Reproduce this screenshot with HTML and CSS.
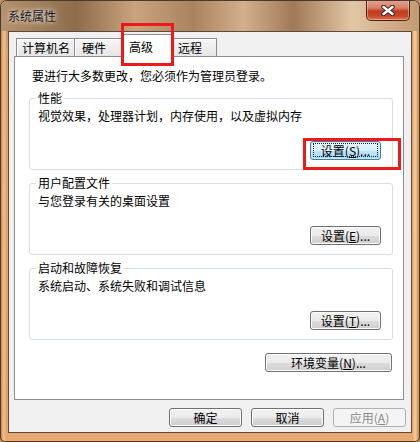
FILE: index.html
```html
<!DOCTYPE html>
<html lang="zh-CN">
<head>
    <meta charset="UTF-8">
    <title>系统属性</title>
    <link rel="stylesheet" href="styles.css">
</head>
<body>
    <div class="window">
        <div class="titlebar">
            <span class="title">系统属性</span>
            <button class="close-btn" aria-label="关闭">
                <svg width="14" height="11" viewBox="0 0 14 11">
                    <path d="M2.5 2 L11.5 9 M11.5 2 L2.5 9" stroke="#3b2c2a" stroke-width="4.6" stroke-linecap="round"/>
                    <path d="M2.5 2 L11.5 9 M11.5 2 L2.5 9" stroke="#ffffff" stroke-width="2.4" stroke-linecap="round"/>
                </svg>
            </button>
        </div>

        <div class="client">
            <div class="tabs">
                <div class="tab tab-name">计算机名</div>
                <div class="tab tab-hw">硬件</div>
                <div class="tab tab-adv active">高级<span class="mark mark-tab"></span></div>
                <div class="tab tab-remote">远程</div>
            </div>

            <div class="panel">
                <p class="intro">要进行大多数更改，您必须作为管理员登录。</p>

                <fieldset class="group">
                    <legend>性能</legend>
                    <p class="desc">视觉效果，处理器计划，内存使用，以及虚拟内存</p>
                    <div class="group-actions">
                        <span class="btn-wrap">
                            <button class="btn btn-set btn-default">设置(<u>S</u>)...</button>
                            <span class="mark mark-btn"></span>
                        </span>
                    </div>
                </fieldset>

                <fieldset class="group">
                    <legend>用户配置文件</legend>
                    <p class="desc">与您登录有关的桌面设置</p>
                    <div class="group-actions">
                        <button class="btn btn-set">设置(<u>E</u>)...</button>
                    </div>
                </fieldset>

                <fieldset class="group">
                    <legend>启动和故障恢复</legend>
                    <p class="desc">系统启动、系统失败和调试信息</p>
                    <div class="group-actions">
                        <button class="btn btn-set">设置(<u>T</u>)...</button>
                    </div>
                </fieldset>

                <div class="env-row">
                    <button class="btn btn-env">环境变量(<u>N</u>)...</button>
                </div>
            </div>

            <div class="footer">
                <button class="btn btn-foot">确定</button>
                <button class="btn btn-foot">取消</button>
                <button class="btn btn-foot" disabled>应用(<u>A</u>)</button>
            </div>
        </div>
    </div>
</body>
</html>
```

FILE: styles.css
```css
/* Reset */
* {
    margin: 0;
    padding: 0;
    box-sizing: border-box;
}

body {
    font-family: "Noto Sans CJK SC", "Noto Sans", sans-serif;
    font-size: 12px;
    color: #000;
    background: #b88d64;
}

/* Window frame */
.window {
    width: 420px;
    height: 442px;
    display: flex;
    flex-direction: column;
    padding: 0 7px 8px;
    border: 1px solid #4b3a2c;
    border-radius: 7px 7px 5px 5px;
    background:
        linear-gradient(90deg, #c98c56 0, #f2c294 3px, #e6a46a 5px, rgba(230, 164, 106, 0) 7px,
            rgba(230, 164, 106, 0) 411px, #e9ab72 412px, #f6cfa6 414px, #c98a52 418px),
        linear-gradient(180deg, #a98460 0, #b89470 28px, #d99f68 60px, #e4a56c 200px, #dd9a5e 380px, #e9aa70 442px);
    overflow: hidden;
}

.titlebar {
    height: 30px;
    margin: 0 -7px;
    padding: 0 9px 0 7px;
    display: flex;
    align-items: flex-start;
    background: linear-gradient(90deg, #b4926e 0, #8d6c4c 18%, #c9a47e 32%, #a8835e 46%, #d2b08c 58%, #9f7a56 70%, #e2c6a6 84%, #c39a72 100%);
}

.title {
    margin-top: 7px;
    line-height: 16px;
    color: #1a1a1a;
    text-shadow: 0 0 4px rgba(255, 255, 255, 0.8), 0 0 8px rgba(255, 255, 255, 0.6);
}

.close-btn {
    margin-left: auto;
    margin-top: -1px;
    width: 44px;
    height: 21px;
    display: flex;
    align-items: center;
    justify-content: center;
    border: 1px solid #4a2216;
    border-top: none;
    border-radius: 0 0 5px 5px;
    background: linear-gradient(180deg, #e3a393 0, #d7806a 40%, #c23c1e 55%, #c6482a 80%, #e2764c 100%);
    box-shadow: inset 0 0 0 1px rgba(255, 220, 200, 0.45);
}

/* Client area */
.client {
    flex: 1;
    display: flex;
    flex-direction: column;
    padding: 2px 7px 0 5px;
    border: 1px solid #5e4a3a;
    background: #f0f0f0;
}

/* Tabs */
.tabs {
    display: flex;
    align-items: flex-end;
    padding-left: 2px;
}

.tab {
    position: relative;
    height: 18px;
    line-height: 17px;
    border: 1px solid #898c95;
    border-left: none;
    border-bottom: none;
    background: linear-gradient(180deg, #f6f6f6 0, #e6e6e6 100%);
    box-shadow: inset 1px 1px 0 #fff;
    white-space: nowrap;
}

.tab-name {
    width: 59px;
    padding-left: 5px;
    border-left: 1px solid #898c95;
}

.tab-hw {
    width: 48px;
    padding-left: 7px;
}

.tab-remote {
    width: 45px;
    padding-left: 6px;
}

.tab.active {
    z-index: 2;
    width: 53px;
    height: 23px;
    margin: 0 -2px -1px;
    padding: 4px 0 0 7px;
    line-height: 16px;
    border-left: 1px solid #898c95;
    background: #fff;
    box-shadow: none;
}

/* Tab page */
.panel {
    height: 344px;
    padding: 11px 10px 0 14px;
    border: 1px solid #898c95;
    background: #fff;
}

.intro {
    margin-left: 3px;
    line-height: 16px;
}

.group {
    margin-top: 6px;
    padding: 3px 11px 9px 8px;
    border: 1px solid #d5dfe5;
    border-radius: 3px;
}

.intro + .group {
    margin-top: 7px;
}

.group legend {
    margin-left: -2px;
    padding: 0 2px;
    line-height: 14px;
}

.desc {
    line-height: 16px;
}

.group-actions {
    display: flex;
    justify-content: flex-end;
    margin-top: 17px;
}

.env-row {
    display: flex;
    justify-content: flex-end;
    margin-top: 13px;
    padding-right: 1px;
}

/* Buttons */
.btn {
    position: relative;
    height: 19px;
    font-family: inherit;
    font-size: 12px;
    line-height: 16px;
    color: #000;
    border: 1px solid #707070;
    border-radius: 3px;
    background: linear-gradient(180deg, #f2f2f2 0, #ebebeb 50%, #dddddd 50%, #cfcfcf 100%);
    box-shadow: inset 0 0 0 1px #fcfcfc;
    cursor: pointer;
}

.btn u {
    text-decoration: underline;
}

.btn-set {
    width: 71px;
}

.btn-env {
    width: 127px;
}

.btn-default {
    border-color: #3c7fb1;
    background: linear-gradient(180deg, #eaf6fd 0, #d9f0fc 50%, #bee6fd 50%, #a7d9f5 100%);
    box-shadow: inset 0 0 0 1px #c8ecfc;
}

.btn-default::before {
    content: "";
    position: absolute;
    top: 1px;
    left: 2px;
    right: 2px;
    bottom: 2px;
    border: 1px dotted #222;
}

.footer {
    display: flex;
    justify-content: flex-end;
    gap: 9px;
    padding-top: 8px;
    margin-right: -2px;
}

.btn-foot {
    width: 73px;
}

.btn[disabled] {
    color: #8a8a8a;
    border-color: #adb2b5;
    background: #f4f4f4;
    box-shadow: none;
    cursor: default;
}

/* Red highlight marks */
.btn-wrap {
    position: relative;
    display: inline-flex;
}

.mark {
    position: absolute;
    z-index: 5;
    border: 3px solid #ee1a1a;
    pointer-events: none;
}

.mark-tab {
    left: -1px;
    top: -12px;
    width: 53px;
    height: 43px;
}

.mark-btn {
    left: -7px;
    top: -3px;
    width: 98px;
    height: 32px;
}
```
